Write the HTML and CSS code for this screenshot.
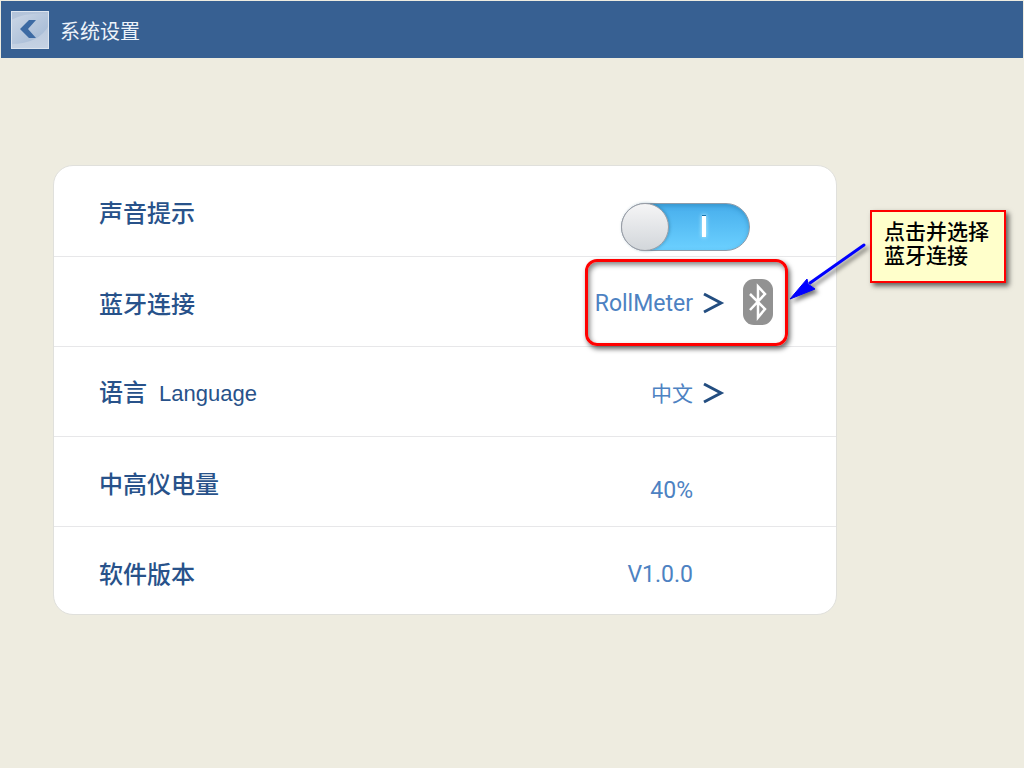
FILE: index.html
```html
<!DOCTYPE html>
<html lang="zh-CN">
<head>
<meta charset="utf-8">
<meta name="viewport" content="width=device-width, initial-scale=1">
<title>系统设置</title>
<link rel="stylesheet" href="styles.css">
</head>
<body>
<header class="topbar">
  <button class="back" type="button" aria-label="返回">
    <svg viewBox="0 0 38 38" aria-hidden="true">
      <defs>
        <linearGradient id="tile" x1="0" y1="0" x2="0" y2="1"><stop offset="0" stop-color="#b3c3d9"/><stop offset="1" stop-color="#c5d2e3"/></linearGradient>
        <linearGradient id="gloss" x1="0" y1="0" x2="1" y2="1"><stop offset="0" stop-color="#ccd7e6"/><stop offset="1" stop-color="#9fb6d3"/></linearGradient>
      </defs>
      <rect width="38" height="38" fill="url(#tile)"/>
      <path d="M0 9Q16 1 38 3V14Q28 33 0 33Z" fill="url(#gloss)"/>
      <rect x=".5" y=".5" width="37" height="37" fill="none" stroke="#dde5ef"/>
      <path d="M18 9H25L17 18L25 27H18L9 18Z" fill="#3c6aa3"/>
    </svg>
  </button>
  <h1 class="title">系统设置</h1>
</header>
<main class="page">
  <section class="card">
    <div class="row">
      <label class="label" for="sound">声音提示</label>
      <input class="switch" id="sound" type="checkbox" role="switch" checked>
    </div>
    <div class="row">
      <span class="label" id="bt-label">蓝牙连接</span>
      <button class="picker picker-device" type="button" aria-describedby="bt-label">
        <span>RollMeter</span>
        <svg class="chevron" viewBox="0 0 20 22" aria-hidden="true"><path d="M1 2L18 11L1 20"/></svg>
        <svg class="bluetooth" viewBox="0 0 30 46" aria-hidden="true"><rect width="30" height="46" rx="11" fill="#929292"/><path d="M7 15L22 30L15 38.500V7.500L22 15L7 31" fill="none" stroke="#fff" stroke-width="2.500"/></svg>
      </button>
      <span class="highlight"></span>
    </div>
    <div class="row">
      <span class="label" id="lang-label">语言<span class="latin">Language</span></span>
      <button class="picker" type="button" aria-describedby="lang-label">
        <span class="chinese">中文</span>
        <svg class="chevron" viewBox="0 0 20 22" aria-hidden="true"><path d="M1 2L18 11L1 20"/></svg>
      </button>
    </div>
    <div class="row">
      <span class="label">中高仪电量</span>
      <span class="value value-low">40%</span>
    </div>
    <div class="row">
      <span class="label">软件版本</span>
      <span class="value">V1.0.0</span>
    </div>
  </section>
  <aside class="callout">
    <p class="note">点击并选择<br>蓝牙连接</p>
    <svg class="arrow" viewBox="0 0 82 64" aria-hidden="true"><path d="M76 5L22 43" stroke="#00f" stroke-width="3" stroke-linecap="round"/><path d="M2 59L19 39L20 44L27 49Z" fill="#00f" stroke="#00f"/></svg>
  </aside>
</main>
</body>
</html>
```
FILE: styles.css
```css
*, *::before, *::after { box-sizing: border-box; }

body {
  margin: 0;
  min-height: 100vh;
  background: #eeece0;
  font-family: Roboto, "Noto Sans CJK SC", sans-serif;
}

button {
  padding: 0;
  border: 0;
  background: none;
  color: inherit;
  font: inherit;
  cursor: pointer;
}

svg { display: block; overflow: visible; }

.topbar {
  display: flex;
  align-items: center;
  gap: 11px;
  height: 57px;
  margin: 1px 1px 0;
  padding: 0 10px;
  background: #376092;
}

.back { width: 38px; height: 38px; }

.title {
  margin: 0;
  padding-top: 2px;
  color: #edf3fa;
  font: 400 20px/30px "Noto Sans CJK SC", sans-serif;
}

.page {
  display: flex;
  align-items: flex-start;
  padding: 107px 18px 40px 53px;
}

.card {
  flex: 1;
  min-width: 0;
  border: 1px solid #e0e0dc;
  border-radius: 20px;
  background: #fff;
}

.row {
  position: relative;
  display: flex;
  align-items: center;
  justify-content: space-between;
  min-height: 90px;
  padding: 2px 143px 0 45px;
  color: #4d82c2;
  font-size: 23px;
  line-height: 32px;
}

.row + .row { border-top: 1px solid #e7e7e9; }
.row:last-child { min-height: 88px; padding-top: 4px; }
.row:has(.picker) { padding-right: 113px; }
.row:has(.picker-device) { padding-right: 63px; }
.row:has(.switch) { padding-right: 86px; }

.label {
  color: #28528a;
  font: 500 24px/36px "Noto Sans CJK SC", sans-serif;
}

.latin {
  margin-left: 12px;
  font-size: 22px;
  font-weight: 400;
  font-family: "Liberation Sans", sans-serif;
}

.switch {
  appearance: none;
  position: relative;
  align-self: flex-end;
  width: 129px;
  height: 48px;
  margin: 0 0 5px;
  border: 1px solid #8e9caa;
  border-radius: 24px;
  background: linear-gradient(#47aeec, #6bd0ff);
  box-shadow: inset 0 2px 4px #267db080;
  cursor: pointer;
}

.switch::before {
  content: "";
  position: absolute;
  left: -1px;
  top: -1px;
  width: 48px;
  height: 48px;
  border: 1px solid #9a9da5;
  border-radius: 50%;
  background: linear-gradient(#f5f5f6, #d2d6da);
  box-shadow: 1px 0 3px #245f8066;
}

.switch::after {
  content: "";
  position: absolute;
  left: 80px;
  top: 11px;
  width: 4px;
  height: 22px;
  border-top: 1px solid #1673ad;
  background: #fff;
  box-shadow: 0 0 4px #c8f2ff;
}

.picker { display: flex; align-items: center; gap: 10px; }
.picker span { padding-top: 2px; }
.chinese { font-size: 21px; font-weight: 400; }

.chevron {
  width: 20px;
  height: 22px;
  fill: none;
  stroke: #234d80;
  stroke-width: 3;
}

.bluetooth { width: 30px; height: 46px; margin: 0 0 2px 10px; }

.value { padding-top: 4px; }
.value-low { padding-top: 16px; }

.highlight {
  position: absolute;
  z-index: 1;
  top: 2px;
  right: 48px;
  width: 203px;
  height: 87px;
  border: 3px solid #f00;
  border-radius: 12px;
  box-shadow: 2px 3px 5px #0009, inset 2px 3px 5px #0007;
  pointer-events: none;
}

.callout { position: relative; margin: 45px 0 0 33px; }

.note {
  margin: 0;
  min-height: 73px;
  padding: 6px 15px 12px 12px;
  border: 2px solid #f00;
  background: #ffffcb;
  box-shadow: 3px 3px 5px #0009;
  color: #000;
  font: 500 21px/24px "Noto Sans CJK SC", sans-serif;
  white-space: nowrap;
}

.arrow {
  position: absolute;
  top: 30px;
  right: 100%;
  width: 82px;
  height: 64px;
  fill: none;
  filter: drop-shadow(3px 3px 2px #0008);
  pointer-events: none;
}
```
